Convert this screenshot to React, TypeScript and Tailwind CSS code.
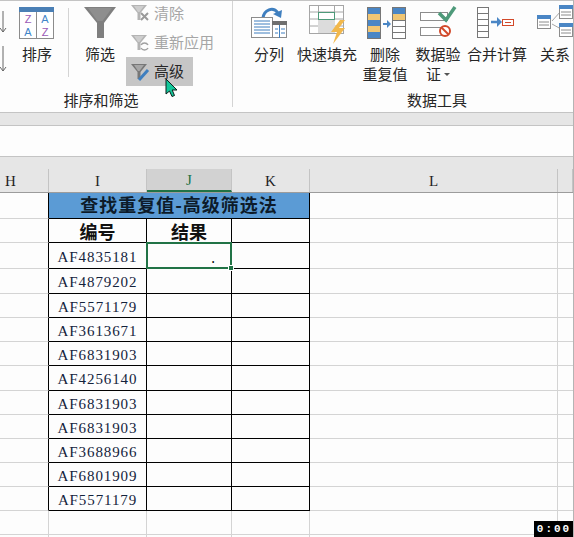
const ribbonFont = "font-['Noto_Sans_CJK_SC',sans-serif]";

const BLUE = "#4a86c5";
const GOLD = "#f0c674";
const GRID = "border-[#d4d4d4]";
const BLACK = "border-black";

function SortArrows() {
  return (
    <svg width="12" height="89" viewBox="0 0 12 89" className="shrink-0">
      <path d="M3 10V31M0 27l3 4 3-4M3 45V70M0 66l3 4 3-4" fill="none" stroke="#666" strokeWidth="1" />
    </svg>
  );
}

function SortIcon() {
  return (
    <svg width="50" height="43" viewBox="0 0 50 43">
      <rect x="7.500" y="6.500" width="34" height="31" fill="#fff" stroke="#8c8c8c" />
      <rect x="7" y="6" width="35" height="5" fill="#4a7fb5" />
      <line x1="24.500" y1="11" x2="24.500" y2="38" stroke="#8c8c8c" />
      <g fontFamily="'Liberation Sans', sans-serif" fontSize="11" textAnchor="middle">
        <text x="16" y="22" fill="#9b59b6">Z</text>
        <text x="16" y="35" fill="#3f86c9">A</text>
        <text x="33" y="22" fill="#3f86c9">A</text>
        <text x="33" y="35" fill="#9b59b6">Z</text>
      </g>
    </svg>
  );
}

function BigFunnel() {
  return (
    <svg width="32" height="43" viewBox="0 0 32 43">
      <path d="M0 6H32L20 22V37H13V22Z" fill="#7f7f7f" />
      <path d="M4 7H28L18.500 20H13.500Z" fill="#8e8e8e" />
    </svg>
  );
}

function SmallFunnel({ color, children }: { color: string; children?: React.ReactNode }) {
  return (
    <svg width="20" height="20" viewBox="0 0 20 20" className="shrink-0">
      <path d="M1 2H17L10.500 10V17H7.500V10Z" fill={color} />
      <path d="M4 3H14L9.500 9H8Z" fill="#fff" opacity="0.35" />
      {children}
    </svg>
  );
}

function TextToColumns() {
  return (
    <svg width="58" height="43" viewBox="0 0 58 43">
      <path d="M23 17C24 9 33 5 38 12" fill="none" stroke="#3f7fbf" strokeWidth="3" />
      <path d="M33 13l8 4 1-8Z" fill="#3f7fbf" />
      <rect x="11.500" y="16.500" width="21" height="20" fill="#fff" stroke="#8c8c8c" />
      <path d="M14 20H30M14 23H30M14 26H30M14 29H30M14 32H30" stroke="#3f7fbf" strokeWidth="1" />
      <rect x="32.500" y="20.500" width="14" height="16" fill="#fff" stroke="#8c8c8c" />
      <rect x="32" y="20" width="15" height="4" fill="#6f6f6f" />
      <path d="M39.500 24V37M35 28H38M41 28H45M35 32H38M41 32H45" stroke="#3f7fbf" strokeWidth="1" />
    </svg>
  );
}

function FlashFill() {
  return (
    <svg width="58" height="43" viewBox="0 0 58 43">
      <rect x="11.500" y="4.500" width="34" height="28" fill="#fff" stroke="#a6a6a6" />
      <path d="M11 11H46M11 18H46M11 25H46M20.500 4V33M36.500 4V33" stroke="#a6a6a6" strokeWidth="1" />
      <rect x="20" y="18" width="17" height="14" fill="#dcdcdc" />
      <rect x="20.500" y="11.500" width="16" height="7" fill="#fff" stroke="#4e9a7a" />
      <path d="M42 19L33 31H39L35 43L47 27H41L47 19Z" fill="#f2b84b" />
    </svg>
  );
}

function RemoveDuplicates() {
  return (
    <svg width="58" height="43" viewBox="0 0 58 43">
      <rect x="11.500" y="6.500" width="13" height="31" fill="#fff" stroke="#777" />
      <rect x="12" y="7" width="12" height="6" fill={BLUE} />
      <rect x="12" y="13" width="12" height="6" fill={GOLD} />
      <rect x="12" y="19" width="12" height="6" fill={BLUE} />
      <rect x="12" y="25" width="12" height="6" fill={GOLD} />
      <rect x="12" y="31" width="12" height="6" fill={BLUE} />
      <path d="M27 23H32" stroke={BLUE} strokeWidth="2" />
      <path d="M31 19l4 4-4 4Z" fill={BLUE} />
      <rect x="36.500" y="6.500" width="13" height="31" fill="#fff" stroke="#777" />
      <rect x="37" y="7" width="12" height="6" fill={BLUE} />
      <rect x="37" y="13" width="12" height="6" fill={GOLD} />
      <path d="M37 19.500H49M37 25.500H49M37 31.500H49" stroke="#777" strokeWidth="1" />
    </svg>
  );
}

function DataValidation() {
  return (
    <svg width="48" height="43" viewBox="0 0 48 43">
      <rect x="6.500" y="11.500" width="27" height="8" fill="#fff" stroke="#8c8c8c" />
      <rect x="6.500" y="26.500" width="27" height="8" fill="#fff" stroke="#8c8c8c" />
      <path d="M25 12L32 19L41 6" fill="none" stroke="#4e9a7a" strokeWidth="3.500" />
      <circle cx="31" cy="30" r="5" fill="#fff" stroke="#d2492a" strokeWidth="2" />
      <path d="M27.500 26.500L34.500 33.500" stroke="#d2492a" strokeWidth="2" />
    </svg>
  );
}

function Consolidate() {
  return (
    <svg width="70" height="43" viewBox="0 0 70 43">
      <rect x="15.500" y="6.500" width="11" height="30" fill="#fff" stroke="#777" />
      <path d="M15 12.500H27M15 18.500H27M15 24.500H27M15 30.500H27" stroke="#777" strokeWidth="1" />
      <path d="M29 21H36" stroke={BLUE} strokeWidth="2.500" />
      <path d="M35 16l5 5-5 5Z" fill={BLUE} />
      <rect x="40.500" y="18.500" width="11" height="6" fill="#fff" stroke="#d2492a" />
      <path d="M43 21.500H49" stroke="#d2492a" strokeWidth="1" />
    </svg>
  );
}

function Relations() {
  return (
    <svg width="46" height="43" viewBox="0 0 46 43" className="shrink-0">
      <path d="M20 20L29 10M20 23L29 28" stroke="#a6a6a6" strokeWidth="1" />
      <rect x="5.500" y="14.500" width="13" height="13" fill="#fff" stroke="#8c8c8c" />
      <rect x="5" y="14" width="14" height="4" fill={BLUE} />
      <path d="M7 21H17M7 24H17" stroke="#8c8c8c" />
      <rect x="27.500" y="4.500" width="13" height="13" fill="#fff" stroke="#8c8c8c" />
      <rect x="27" y="4" width="14" height="4" fill={BLUE} />
      <path d="M29 11H39M29 14H39" stroke="#8c8c8c" />
      <rect x="27.500" y="22.500" width="13" height="13" fill="#fff" stroke="#8c8c8c" />
      <rect x="27" y="22" width="14" height="4" fill={BLUE} />
      <path d="M29 29H39M29 32H39" stroke="#8c8c8c" />
    </svg>
  );
}

function RibbonButton({ className, icon, lines }: { className: string; icon: React.ReactNode; lines: React.ReactNode[] }) {
  return (
    <div className={`flex shrink-0 flex-col items-center ${className}`}>
      <div className="flex h-[43px] justify-center">{icon}</div>
      {lines.map((line, i) => (
        <div key={i} className="whitespace-nowrap text-[15px] leading-[20px] text-[#262626]">
          {line}
        </div>
      ))}
    </div>
  );
}

function Ribbon() {
  return (
    <div className={`flex h-[112px] border-t border-[#c4c4c4] ${ribbonFont}`}>
      <div className="flex h-[106px] w-[233px] shrink-0 flex-col border-r border-[#d4d4d4]">
        <div className="flex h-[89px]">
          <SortArrows />
          <RibbonButton className="w-[50px]" icon={<SortIcon />} lines={["排序"]} />
          <div className="ml-[6px] mt-[7px] h-[69px] w-px bg-[#d4d4d4]" />
          <RibbonButton className="ml-[15px] w-[32px]" icon={<BigFunnel />} lines={["筛选"]} />
          <div className="ml-[10px] flex w-[67px] flex-col">
            <div className="flex h-[24px] items-center gap-[4px] pl-[4px] text-[15px] text-[#a6a6a6]">
              <SmallFunnel color="#b4b4b4">
                <path d="M11 10L18 17M18 10L11 17" stroke="#9a9a9a" strokeWidth="2" />
              </SmallFunnel>
              <span>清除</span>
            </div>
            <div className="mt-[5px] flex h-[25px] w-[100px] items-center gap-[4px] pl-[4px] text-[15px] text-[#a6a6a6]">
              <SmallFunnel color="#b4b4b4">
                <path d="M11 12a4 4 0 0 1 7 0M18 15a4 4 0 0 1-7 0" fill="none" stroke="#a0a0a0" strokeWidth="1.500" />
              </SmallFunnel>
              <span>重新应用</span>
            </div>
            <div className="mt-[2px] flex h-[29px] items-center gap-[4px] bg-[#c6c6c6] pl-[4px] text-[15px] text-[#262626]">
              <SmallFunnel color="#777">
                <path d="M9 18L18 8" stroke="#3f7fbf" strokeWidth="3" />
              </SmallFunnel>
              <span>高级</span>
            </div>
          </div>
        </div>
        <div className="pr-[30px] text-center text-[15px] leading-[20px] text-[#262626]">排序和筛选</div>
      </div>
      <div className="flex min-w-0 flex-1 flex-col">
        <div className="flex h-[89px] pl-[7px]">
          <RibbonButton className="w-[58px]" icon={<TextToColumns />} lines={["分列"]} />
          <RibbonButton className="w-[58px]" icon={<FlashFill />} lines={["快速填充"]} />
          <RibbonButton className="w-[58px]" icon={<RemoveDuplicates />} lines={["删除", "重复值"]} />
          <RibbonButton
            className="w-[48px]"
            icon={<DataValidation />}
            lines={[
              "数据验",
              <span className="flex items-center gap-[3px]">
                证<span className="h-0 w-0 border-x-[3px] border-t-[3px] border-x-transparent border-t-[#555]" />
              </span>,
            ]}
          />
          <RibbonButton className="w-[70px]" icon={<Consolidate />} lines={["合并计算"]} />
          <RibbonButton className="w-[46px]" icon={<Relations />} lines={["关系"]} />
        </div>
        <div className="pl-[68px] text-center text-[15px] leading-[20px] text-[#262626]">数据工具</div>
      </div>
    </div>
  );
}

const headers = [
  { label: "H", className: "justify-start pl-[5px]" },
  { label: "I", className: "justify-center" },
  { label: "J", className: "justify-center border-b-2 border-b-[#217346] bg-[#d2d2d2] text-[#217346]" },
  { label: "K", className: "justify-center" },
  { label: "L", className: "justify-center" },
  { label: "", className: "" },
];

const codes = [
  "AF4835181",
  "AF4879202",
  "AF5571179",
  "AF3613671",
  "AF6831903",
  "AF4256140",
  "AF6831903",
  "AF6831903",
  "AF3688966",
  "AF6801909",
  "AF5571179",
];

const rowHeights = [
  "h-[26px]",
  "h-[25px]",
  "h-[24px]",
  "h-[24px]",
  "h-[24px]",
  "h-[25px]",
  "h-[24px]",
  "h-[24px]",
  "h-[24px]",
  "h-[24px]",
  "h-[24px]",
];

const COLS = "grid grid-rows-1 grid-cols-[49px_98px_85px_78px_248px_1fr]";
const serif = "font-['Liberation_Serif','Noto_Sans_CJK_SC',serif]";

function Row({ className, cells }: { className: string; cells?: React.ReactNode }) {
  return <div className={`${COLS} ${className}`}>{cells}</div>;
}

function Sheet() {
  return (
    <div>
      <div className={`${COLS} h-[36px] items-end border-b border-[#9c9c9c] bg-[#e6e6e6] ${serif}`}>
        {headers.map((h) => (
          <div
            key={h.label}
            className={`flex h-[23px] items-center border-r border-[#c4c4c4] pt-[2px] text-[15px] leading-none text-[#1f1f1f] ${h.className}`}
          >
            {h.label}
          </div>
        ))}
      </div>

      {/* Title row */}
      <Row
        className="h-[26px]"
        cells={
          <>
            <div className={`border-r border-b ${BLACK} border-b-[#d4d4d4]`} />
            <div className={`col-span-3 flex items-center justify-center border-r border-b ${BLACK} bg-[#5b9bd5] pb-[3px] ${ribbonFont} text-[18px] font-bold leading-none tracking-[1px] text-[#0d1b2a]`}>
              查找重复值-高级筛选法
            </div>
            <div className={`border-r border-b ${GRID}`} />
            <div className={`border-b ${GRID}`} />
          </>
        }
      />
      {/* Column titles */}
      <Row
        className="h-[24px]"
        cells={
          <>
            <div className={`border-r border-b ${BLACK} border-b-[#d4d4d4]`} />
            <div className={`flex items-center justify-center border-r border-b ${BLACK} ${ribbonFont} text-[18px] font-bold leading-none text-[#111]`}>编号</div>
            <div className={`flex items-center justify-center border-r border-b ${BLACK} ${ribbonFont} text-[18px] font-bold leading-none text-[#111]`}>结果</div>
            <div className={`border-r border-b ${BLACK}`} />
            <div className={`border-r border-b ${GRID}`} />
            <div className={`border-b ${GRID}`} />
          </>
        }
      />
      {codes.map((code, i) => (
        <Row
          key={i}
          className={rowHeights[i]}
          cells={
            <>
              <div className={`border-r border-b ${BLACK} border-b-[#d4d4d4]`} />
              <div className={`flex items-center justify-center border-r border-b ${BLACK} pt-[3px] ${serif} text-[15px] leading-none tracking-[0.9px] text-[#14233c]`}>{code}</div>
              <div className={`relative border-r border-b ${BLACK}`}>
                {i === 0 && (
                  <div className="absolute -left-px -top-px z-10 flex h-[27px] w-[86px] items-end justify-end border-2 border-[#217346] pb-[1px] pr-[15px] text-[14px] leading-[16px] text-black">
                    .
                    <span className="absolute -bottom-[4px] -right-[4px] h-[6px] w-[6px] border border-white bg-[#217346]" />
                  </div>
                )}
              </div>
              <div className={`border-r border-b ${BLACK}`} />
              <div className={`border-r border-b ${GRID}`} />
              <div className={`border-b ${GRID}`} />
            </>
          }
        />
      ))}
      {/* Empty rows under the table */}
      {["h-[24px]", "h-[24px]"].map((h, i) => (
        <Row
          key={i}
          className={h}
          cells={
            <>
              <div className={`border-r border-b ${GRID}`} />
              <div className={`border-r border-b ${GRID}`} />
              <div className={`border-r border-b ${GRID}`} />
              <div className={`border-r border-b ${GRID}`} />
              <div className={`border-r border-b ${GRID}`} />
              <div className={`border-b ${GRID}`} />
            </>
          }
        />
      ))}
    </div>
  );
}

export default function App() {
  return (
    <div className="relative h-[537px] w-[574px] overflow-hidden border-r border-[#b4b4b4] bg-[#fdfdfd]">
      <Ribbon />
      <div className="h-[14px] border-y border-[#c4c4c4] bg-[#e6e6e6]" />
      <div className="h-[31px] border-b border-[#c4c4c4]" />
      <Sheet />

      {/* Mouse pointer */}
      <svg width="14" height="20" viewBox="0 0 14 20" className="absolute left-[165px] top-[78px] z-20">
        <path d="M1 1V16L4.500 13L7 18.500L9.500 17.500L7.200 12H12Z" fill="#12c79a" stroke="#0b1f1a" strokeWidth="1" />
      </svg>

      {/* Video timestamp */}
      <div className="absolute bottom-0 right-[-1px] z-20 flex h-[16px] w-[40px] items-center justify-center bg-black font-['Liberation_Mono',monospace] text-[11px] font-bold tracking-[2px] text-white">
        0:00
      </div>
    </div>
  );
}
